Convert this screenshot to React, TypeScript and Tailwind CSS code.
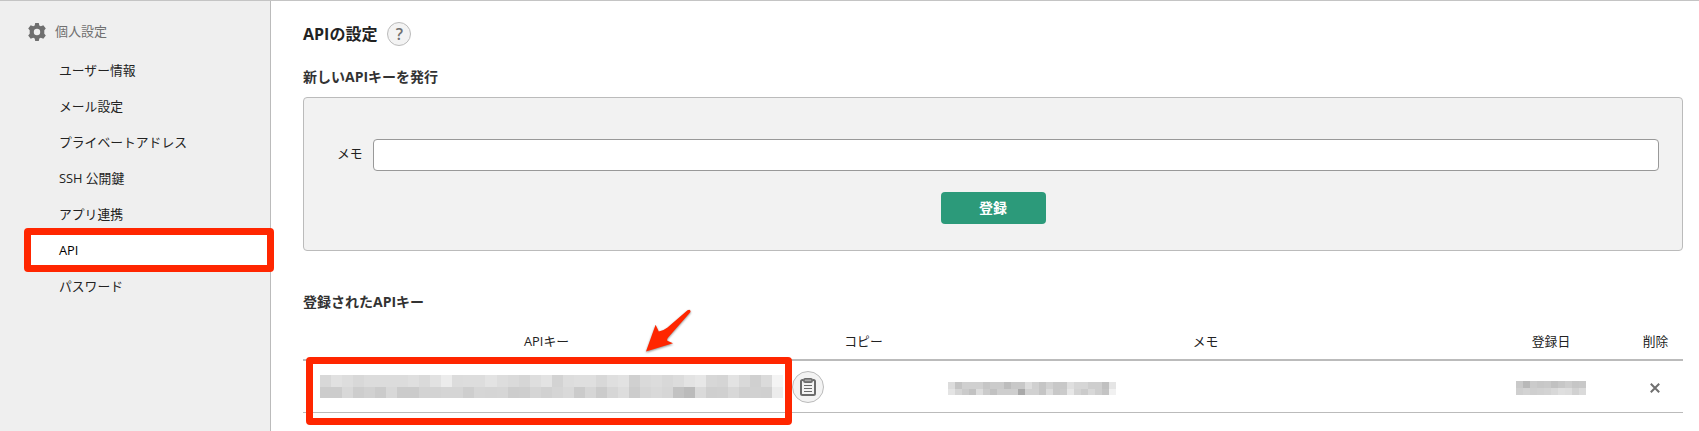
interface MenuItem {
  label: string;
  active?: boolean;
}

const menuItems: MenuItem[] = [
  { label: "ユーザー情報" },
  { label: "メール設定" },
  { label: "プライベートアドレス" },
  { label: "SSH 公開鍵" },
  { label: "アプリ連携" },
  { label: "API", active: true },
  { label: "パスワード" },
];

// Gray levels (hex) of the masked values, one row of cells per string
const keyMask = [
  "d8 e1 dd d8 dc dc dc dc df da e2 ec dc dd dd e3 dd da d6 de e3 d3 dd df df d8 df e2 d0 da dc d8 dc e3 e7 d7 d5 e3 d9 d0 db f4",
  "cc cc d8 cd d1 cb d8 cb cb d3 d3 d5 d5 ce d6 d5 d6 cd ce d5 d1 d5 d9 cb d6 cb d6 dd cc d6 d9 d6 c2 bb da cf d0 d8 d0 d1 d0 ec",
];
const memoMask = [
  "dc c4 d0 d0 d0 c6 cb cb bd c8 c8 dd d0 c5 d1 c8 c8 df d6 d6 ce ce c0 e5",
  "e4 d5 cb c2 dd cb c1 ce ce ce a9 d1 d1 c5 dc c8 cb e7 d3 cb d8 ce c4 f1",
];
const dateMask = [
  "c9 b9 cb c7 c9 c1 c7 cd c6 c8",
  "cf d3 cf d1 d3 d8 df dd d1 da",
];

function Mosaic({ rows, className }: { rows: string[]; className: string }) {
  return (
    <div className={`flex flex-col ${className}`}>
      {rows.map((row, r) => (
        <div key={r} className="flex flex-1">
          {row.split(" ").map((g, i) => (
            <span key={i} className="flex-1" style={{ backgroundColor: `#${g}${g}${g}` }} />
          ))}
        </div>
      ))}
    </div>
  );
}

function GearIcon() {
  return (
    <svg className="h-[18px] w-[18px]" viewBox="0 0 18 18" fill="#6f6f6f" fillRule="evenodd">
      <path d="M7.2 0h3.6l.5 2.4 1.5.9 2.5-1L17.8 5.4l-1.5 1.9v3.4l1.500 1.900-2.500 3.100-2.500-1-1.500.9-.5 2.400H7.200l-.5-2.400-1.500-.9-2.500 1L.2 12.600l1.500-1.900V7.300L.2 5.400l2.500-3.100 2.500 1 1.500-.9zM9 5.800a3.200 3.200 0 1 0 0 6.400 3.200 3.200 0 0 0 0-6.400z" />
    </svg>
  );
}

function ClipboardIcon() {
  return (
    <svg className="h-[18px] w-4" viewBox="0 0 16 18" fill="none" stroke="#6b6b6b">
      <path strokeWidth="2" d="M3.500 2H2.500Q1 2 1 3.500v12Q1 17 2.500 17h11q1.500 0 1.500-1.500v-12Q15 2 13.500 2h-1" />
      <rect x="3.900" y=".8" width="8.200" height="3.300" rx="1.200" strokeWidth="1.600" fill="#aaa" />
      <path strokeWidth="1" d="M4 7.500h8M4 10.500h8M4 13.500h8" />
    </svg>
  );
}

function Sidebar() {
  return (
    <aside className="w-[271px] shrink-0 border-r border-[#bbb] bg-[#efefef]">
      <div className="flex h-[51px] items-center gap-[9px] pt-[11px] pl-7 text-[13px] text-[#707070]">
        <GearIcon />
        <span>個人設定</span>
      </div>
      <ul>
        {menuItems.map((item) => (
          <li
            key={item.label}
            className={`relative h-9 pl-[59px] leading-9 ${item.active ? "text-black" : ""}`}
          >
            {item.active && (
              <div className="absolute -top-[4px] left-6 h-[44px] w-[250px] rounded-[4px] border-[7px] border-[#ff2600] bg-white" />
            )}
            <span className="relative">{item.label}</span>
          </li>
        ))}
      </ul>
    </aside>
  );
}

function NewKeyForm() {
  return (
    <div className="flex h-[154px] flex-col items-center rounded-[4px] border border-[#bbb] bg-[#f2f2f2] pt-[41px] pr-[23px] pl-[33px]">
      <div className="flex w-full items-center">
        <label htmlFor="memo" className="w-9 shrink-0 pb-[2px]">
          メモ
        </label>
        <input
          id="memo"
          type="text"
          className="h-8 flex-1 rounded-[4px] border border-[#999] bg-white px-2 outline-none"
        />
      </div>
      <button className="mt-[21px] mr-[10px] h-8 w-[105px] rounded-[4px] bg-[#2c9a7a] text-sm font-bold text-white">
        登録
      </button>
    </div>
  );
}

function Arrow() {
  return (
    <svg
      className="absolute top-[304px] left-[640px] h-[54px] w-[60px] drop-shadow-[0_1px_1px_rgba(0,0,0,0.45)]"
      viewBox="640 305 60 54"
      fill="#ff2600"
    >
      <path d="M646 351.500L655.600 324.700L658.800 331.500Q663 331 667.500 327.500L687.500 310.300Q690.800 308.800 690.500 312L669 336.500Q666.500 339 667.300 340.700L673 343.300Z" />
    </svg>
  );
}

function KeyTable() {
  return (
    <div className="grid grid-cols-[487px_147px_537px_154px_55px]">
      <div className="col-span-5 grid h-[41px] grid-cols-subgrid border-b-2 border-[#bbb] text-center leading-[42px]">
        <span>APIキー</span>
        <span>コピー</span>
        <span>メモ</span>
        <span>登録日</span>
        <span>削除</span>
      </div>
      <div className="relative col-span-5 grid h-[52px] grid-cols-subgrid items-center border-b border-[#bbb]">
        <Mosaic rows={keyMask} className="ml-[17px] h-[23px] w-[463px]" />
        <div className="absolute -top-[4px] left-[3px] h-[68px] w-[486px] rounded-[4px] border-[7px] border-[#ff2600]" />
        <button
          aria-label="コピー"
          className="relative mt-px ml-[2px] flex h-8 w-8 items-center justify-center rounded-full border border-[#bbb] bg-[#f3f3f3]"
        >
          <ClipboardIcon />
        </button>
        <Mosaic rows={memoMask} className="mt-[4px] ml-[11px] h-[13px] w-[168px]" />
        <Mosaic rows={dateMask} className="mt-[3px] ml-[42px] h-[14px] w-[70px]" />
        <svg className="mt-[3px] ml-[22px] h-[10px] w-[10px]" viewBox="0 0 10 10" stroke="#707070" strokeWidth="2">
          <path d="M.8.8l8.400 8.400M9.200.8L.8 9.200" />
        </svg>
      </div>
    </div>
  );
}

export default function App() {
  return (
    <div className="relative flex h-[431px] w-[1699px] overflow-hidden border-t border-[#c4c4c4] bg-white font-['Open_Sans','Noto_Sans_CJK_JP',sans-serif] text-[12.8px] text-[#222]">
      <Sidebar />
      <main className="w-[1412px] pt-[21px] pl-8">
        <div className="flex h-6 items-center gap-[10px]">
          <h1 className="text-base leading-6 font-bold">APIの設定</h1>
          <span className="flex h-6 w-6 items-center justify-center rounded-full border border-[#bbb] bg-[#f3f3f3] text-base leading-none font-semibold text-[#707070]">
            ?
          </span>
        </div>
        <h2 className="mt-[21px] h-[30px] text-sm leading-5 font-bold text-[#333]">新しいAPIキーを発行</h2>
        <NewKeyForm />
        <h2 className="mt-[41px] h-7 text-sm leading-5 font-bold text-[#333]">登録されたAPIキー</h2>
        <KeyTable />
      </main>
      <Arrow />
    </div>
  );
}
